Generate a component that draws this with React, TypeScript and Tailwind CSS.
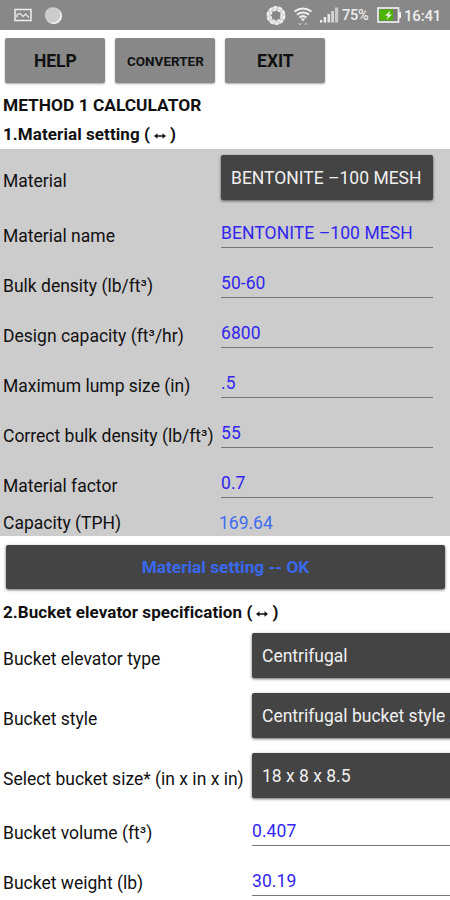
import type { ReactNode } from 'react'

const materialFields = [
  { label: 'Material name', value: 'BENTONITE –100 MESH' },
  { label: 'Bulk density (lb/ft³)', value: '50-60' },
  { label: 'Design capacity (ft³/hr)', value: '6800' },
  { label: 'Maximum lump size (in)', value: '.5' },
  { label: 'Correct bulk density (lb/ft³)', value: '55' },
  { label: 'Material factor', value: '0.7' },
]

const bucketSelects = [
  { label: 'Bucket elevator type', value: 'Centrifugal' },
  { label: 'Bucket style', value: 'Centrifugal bucket style A' },
  { label: 'Select bucket size* (in x in x in)', value: '18 x 8 x 8.5' },
]

const bucketFields = [
  { label: 'Bucket volume (ft³)', value: '0.407' },
  { label: 'Bucket weight (lb)', value: '30.19' },
]

function StatusBar() {
  return (
    <header className="flex h-[30px] items-center bg-[#888888] pl-[14px] text-[#eeeeee]">
      <svg width="18" height="14" viewBox="0 0 18 14" fill="none" stroke="currentColor">
        <rect x="1" y="1.5" width="16" height="11" strokeWidth="1.5" />
        <path d="M3 9.5V6.500l3-1 3 3 2.500-2.500L15 9.500" strokeWidth="1.5" strokeOpacity="0.85" />
      </svg>
      <svg className="ml-[12px]" width="19" height="19" viewBox="0 0 19 19">
        <circle cx="9.8" cy="10" r="8.2" fill="#f2f2f2" />
        <circle cx="8.6" cy="9" r="7.8" fill="#cccccc" />
      </svg>
      <svg className="ml-[203px]" width="20" height="20" viewBox="0 0 20 20" fill="none" stroke="currentColor">
        <circle cx="10" cy="10.500" r="7.2" strokeWidth="4" strokeOpacity="0.75" />
        <circle cx="10" cy="10.500" r="8.3" strokeWidth="2.4" strokeDasharray="3.5 1.7" />
        <circle cx="10" cy="10.500" r="5.4" strokeWidth="1.8" strokeDasharray="2.6 1.8" />
      </svg>
      <svg className="mt-[1px] ml-[7px]" width="20" height="20" viewBox="0 0 20 20" fill="none" stroke="currentColor">
        <path d="M1.500 5.500q8.500-6 17 0M4 8.700q6-4.400 12 0M6.500 11.500q3.500-2.600 7 0" strokeWidth="2.1" />
        <path d="M7.700 12.500h4.600L10 15.500z" fill="currentColor" stroke="none" />
        <path d="M5.500 17l1.500 2 1.500-2M11.500 19l1.500-2 1.500 2" strokeWidth="1" strokeOpacity="0.6" />
      </svg>
      <svg className="ml-[7px]" width="19" height="16" viewBox="0 0 19 16" fill="currentColor">
        <rect x="0" y="13" width="2.2" height="2.5" />
        <rect x="3.7" y="10" width="2.4" height="5.5" />
        <rect x="7.5" y="7" width="2.6" height="8.5" opacity="0.9" />
        <rect x="11.2" y="4" width="2.8" height="11.5" opacity="0.75" />
        <rect x="15" y="0.5" width="3.2" height="15" opacity="0.65" />
      </svg>
      <span className="mt-[2px] ml-[3px] w-[28px] text-[14.5px] font-medium tracking-[-0.2px] whitespace-nowrap">
        75%
      </span>
      <svg className="ml-[7px]" width="24" height="16" viewBox="0 0 24 16">
        <rect x="1" y="1" width="20.5" height="14" fill="#777777" stroke="#eeeeee" strokeWidth="1.7" />
        <rect x="2.500" y="2.500" width="13.500" height="11" fill="#4bb400" />
        <rect x="22" y="5" width="2" height="6" fill="#eeeeee" />
        <path d="M13.500 3.500L8 8.800h3L9.500 12.700 15 7.400h-3z" fill="#eeeeee" />
      </svg>
      <span className="mt-[2px] ml-[3px] text-[15px] font-medium tracking-[-0.2px] whitespace-nowrap">16:41</span>
    </header>
  )
}

function ToolButton({ children, small }: { children: ReactNode; small?: boolean }) {
  return (
    <button
      className={`h-[45px] w-[100px] rounded-[2px] bg-[#888888] pt-[2px] font-bold shadow-[0_1px_2px_rgba(0,0,0,0.35)] ${
        small ? 'text-[13.5px]' : 'text-[17.5px]'
      }`}
    >
      {children}
    </button>
  )
}

function SectionTitle({ children }: { children: ReactNode }) {
  return (
    <h2 className="flex h-5 items-center pl-[3px] text-[17px] leading-5 font-bold tracking-[0.08px] whitespace-nowrap">
      {children} (
      <svg className="mt-[4px] mr-[4px] ml-[4px]" width="12" height="6" viewBox="0 0 12 6" fill="currentColor">
        <path d="M0 3l3.500-2.800v2h5v-2L12 3 8.500 5.800v-2h-5v2z" />
      </svg>
      )
    </h2>
  )
}

function Label({ children }: { children: ReactNode }) {
  return <span className="block pl-[3px] leading-5 whitespace-nowrap">{children}</span>
}

function Select({ value }: { value: string }) {
  return (
    <button className="h-[45px] w-full overflow-hidden rounded-[2px] bg-[#444444] pt-[2px] pl-[10px] text-left whitespace-nowrap text-[#f0f0f0] shadow-[0_1px_3px_rgba(0,0,0,0.6)]">
      {value}
    </button>
  )
}

function Field({ value }: { value: string }) {
  return (
    <div className="h-[45px] border-b border-[#777777] pt-[20px] leading-5 tracking-[0.07px] whitespace-nowrap text-[#3226ee]">
      {value}
    </div>
  )
}

export default function App() {
  return (
    <div className="h-[900px] w-[450px] overflow-hidden bg-white font-[Roboto,sans-serif] text-[17.5px] text-[#111111]">
      <StatusBar />
      <nav className="flex gap-[10px] pt-[8px] pl-[5.4px]">
        <ToolButton>HELP</ToolButton>
        <ToolButton small>CONVERTER</ToolButton>
        <ToolButton>EXIT</ToolButton>
      </nav>
      <h1 className="mt-[12px] pl-[3px] text-[17.35px] leading-5 font-bold">METHOD 1 CALCULATOR</h1>
      <div className="h-[34px] pt-[9px]">
        <SectionTitle>1.Material setting</SectionTitle>
      </div>

      <section className="h-[387px] bg-[#cccccc]">
        <div className="grid h-[54px] grid-cols-[221px_212px]">
          <div className="pt-[22px]">
            <Label>Material</Label>
          </div>
          <div className="pt-[6px]">
            <Select value="BENTONITE –100 MESH" />
          </div>
        </div>
        {materialFields.map((field) => (
          <div key={field.label} className="grid h-[50px] grid-cols-[221px_212px]">
            <div className="pt-[23px]">
              <Label>{field.label}</Label>
            </div>
            <Field value={field.value} />
          </div>
        ))}
        <div className="grid grid-cols-[219px_1fr] pt-[10px] leading-5">
          <Label>Capacity (TPH)</Label>
          <span className="text-[#3f6cf0]">169.64</span>
        </div>
      </section>

      <div className="h-[66px] pt-[9px] pr-[5px] pl-[6px]">
        <button className="h-[44px] w-full rounded-[2px] bg-[#444444] pt-[1px] text-[17.3px] font-bold text-[#3a68ee] shadow-[0_1px_3px_rgba(0,0,0,0.6)]">
          Material setting -- OK
        </button>
      </div>

      <SectionTitle>2.Bucket elevator specification</SectionTitle>
      <section className="h-[179px] pt-[4px]">
        {bucketSelects.map((item) => (
          <div key={item.label} className="grid h-[60px] grid-cols-[252px_212px]">
            <div className="pt-[23px]">
              <Label>{item.label}</Label>
            </div>
            <div className="pt-[7px]">
              <Select value={item.value} />
            </div>
          </div>
        ))}
      </section>
      {bucketFields.map((field) => (
        <div key={field.label} className="grid h-[50px] grid-cols-[252px_212px]">
          <div className="pt-[22px]">
            <Label>{field.label}</Label>
          </div>
          <Field value={field.value} />
        </div>
      ))}
    </div>
  )
}
